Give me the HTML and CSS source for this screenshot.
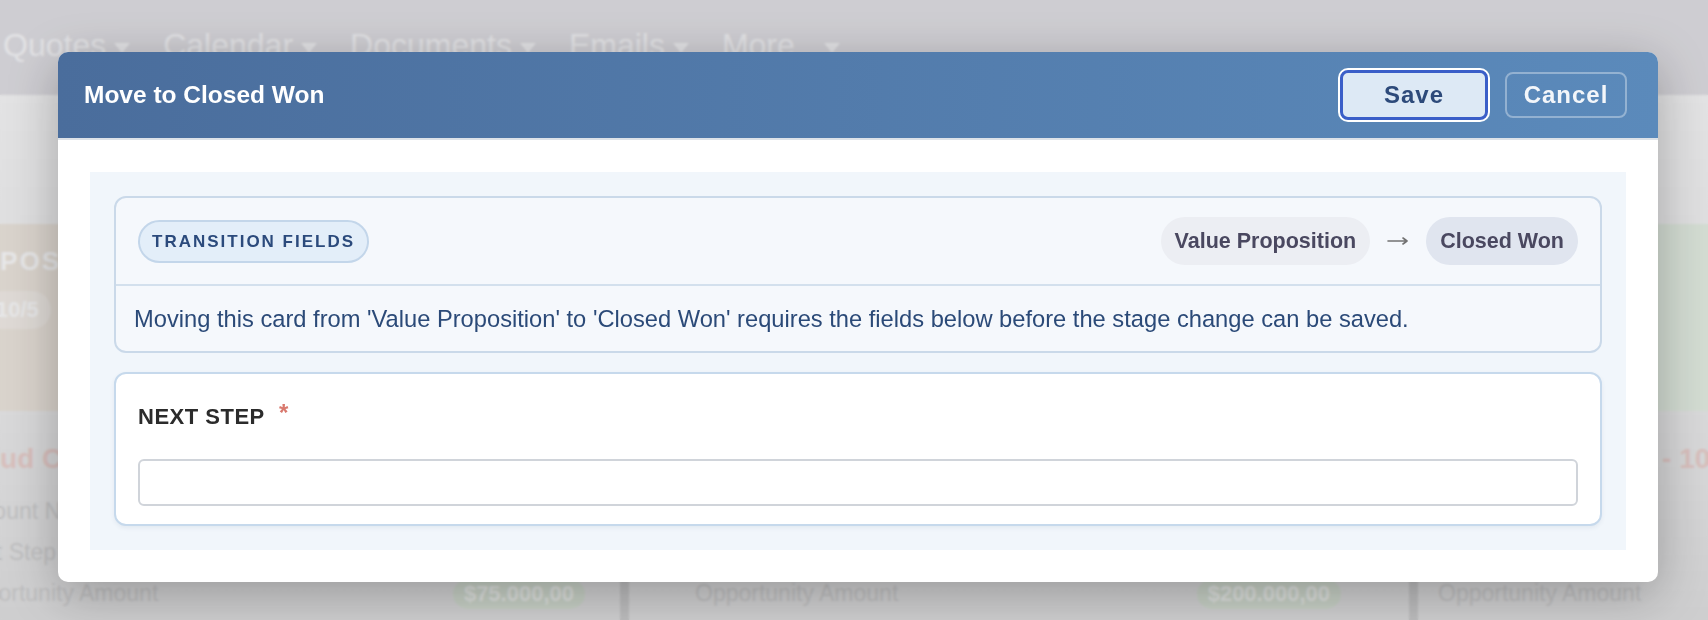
FILE: index.html
```html
<!DOCTYPE html>
<html lang="en">
<head>
    <meta charset="UTF-8">
    <meta name="viewport" content="width=device-width, initial-scale=1.0">
    <title>Pipeline Board</title>
    <link rel="stylesheet" href="styles.css">
</head>
<body>

    <!-- Top navigation -->
    <nav class="topnav">
        <span class="nav-item">Quotes<i class="caret"></i></span>
        <span class="nav-item">Calendar<i class="caret"></i></span>
        <span class="nav-item">Documents<i class="caret"></i></span>
        <span class="nav-item">Emails<i class="caret"></i></span>
        <span class="nav-item nav-more">More<i class="caret"></i></span>
    </nav>

    <!-- Kanban board -->
    <div class="board">
        <section class="column col-proposal">
            <div class="col-head">
                <span class="col-title">PROPOSAL</span>
                <span class="col-count">10/5</span>
            </div>
            <div class="deal">
                <div class="deal-name">Cloud Consulting</div>
                <div class="deal-row">Account Name</div>
                <div class="deal-row">Next Step</div>
                <div class="deal-row deal-amount">
                    <span>Opportunity Amount</span>
                    <span class="money">$75.000,00</span>
                </div>
            </div>
        </section>

        <section class="column col-value">
            <div class="col-head">
                <span class="col-title">VALUE PROPOSITION</span>
                <span class="col-count">4/5</span>
            </div>
            <div class="deal">
                <div class="deal-name">Enterprise Upgrade</div>
                <div class="deal-row">Account Name</div>
                <div class="deal-row">Next Step</div>
                <div class="deal-row deal-amount">
                    <span>Opportunity Amount</span>
                    <span class="money">$200.000,00</span>
                </div>
            </div>
        </section>

        <section class="column col-won">
            <div class="col-head">
                <span class="col-title">CLOSED WON</span>
                <span class="col-count">2/5</span>
            </div>
            <div class="deal">
                <div class="deal-name">Cloud Seats Pro - 100</div>
                <div class="deal-row">Account Name</div>
                <div class="deal-row">Next Step</div>
                <div class="deal-row deal-amount">
                    <span>Opportunity Amount</span>
                </div>
            </div>
        </section>
    </div>

    <!-- Stage change dialog -->
    <div class="overlay">
        <div class="modal">
            <div class="modal-header">
                <h2 class="modal-title">Move to Closed Won</h2>
                <div class="modal-actions">
                    <button class="btn btn-save">Save</button>
                    <button class="btn btn-cancel">Cancel</button>
                </div>
            </div>

            <div class="modal-body">
                <div class="fields-panel">
                    <div class="transition-card">
                        <div class="transition-head">
                            <span class="badge">TRANSITION FIELDS</span>
                            <div class="stages">
                                <span class="stage stage-from">Value Proposition</span>
                                <svg class="stage-arrow" width="22" height="12" viewBox="0 0 22 12">
                                    <path d="M1 6h19M16 3l4 3-4 3" fill="none" stroke="#727272" stroke-width="1.6" stroke-linecap="round" stroke-linejoin="round"/>
                                </svg>
                                <span class="stage stage-to">Closed Won</span>
                            </div>
                        </div>
                        <p class="transition-note">Moving this card from 'Value Proposition' to 'Closed Won' requires the fields below before the stage change can be saved.</p>
                    </div>

                    <div class="field-card">
                        <label class="field-label" for="nextStep">NEXT STEP <span class="required">*</span></label>
                        <input type="text" id="nextStep" class="field-input">
                    </div>
                </div>
            </div>
        </div>
    </div>

</body>
</html>
```

FILE: styles.css
```css
* {
    margin: 0;
    padding: 0;
    box-sizing: border-box;
    font-family: "Liberation Sans", Arial, sans-serif;
}

body {
    height: 100vh;
    overflow: hidden;
    background: #f6f6f6;
}

/* Top navigation */
.topnav {
    height: 95px;
    display: flex;
    align-items: flex-start;
    gap: 33px;
    padding: 27px 0 0 3px;
    background: #e4e3e7;
}

.nav-item {
    display: flex;
    align-items: center;
    font-size: 32px;
    line-height: 36px;
    color: #fafafc;
}

.caret {
    width: 0;
    height: 0;
    margin: 6px 0 0 8px;
    border-left: 8px solid transparent;
    border-right: 8px solid transparent;
    border-top: 10px solid #fafafc;
}

.nav-more .caret {
    margin-left: 29px;
}

/* Board */
.board {
    display: flex;
    margin-left: -120px;
    padding-top: 129px;
    height: calc(100vh - 95px);
    background: linear-gradient(180deg, #fbfbfb 0%, #f0f0f0 60%, #e4e4e4 100%);
}

.column {
    flex: none;
    border-right: 9px solid #d0d0d0;
}

.col-proposal {
    width: 749px;
    padding: 0 35px 0 0;
}

.col-value {
    width: 789px;
    padding: 0 68px 0 0;
}

.col-won {
    width: 500px;
    border-right: none;
}

.col-head {
    height: 187px;
    padding: 22px 0 0 58px;
    display: flex;
    flex-direction: column;
    align-items: flex-start;
    gap: 14px;
    background: #f0e9e0;
}

.col-value .col-head {
    background: #e6edf6;
    padding-left: 66px;
}

.col-won .col-head {
    background: #e9f3e7;
    padding-left: 20px;
}

.col-title {
    font-size: 26px;
    font-weight: bold;
    letter-spacing: 2px;
    color: #ffffff;
}

.col-count {
    margin-left: 46px;
    padding: 6px 12px;
    border-radius: 20px;
    background: #f5f0ea;
    color: #ffffff;
    font-size: 22px;
    font-weight: bold;
}

.col-value .col-count,
.col-won .col-count {
    margin-left: 0;
}

.deal {
    padding: 31px 0 0 75px;
}

.col-value .deal {
    padding-left: 66px;
}

.col-won .deal {
    padding-left: 20px;
}

.deal-name {
    font-size: 28px;
    font-weight: bold;
    line-height: 34px;
    color: #efd3cf;
    white-space: nowrap;
    margin-bottom: 15px;
}

.deal-row {
    font-size: 23px;
    line-height: 41px;
    color: #d2d2d2;
    white-space: nowrap;
}

.deal-amount {
    display: flex;
    justify-content: space-between;
    align-items: center;
}

.money {
    padding: 2px 11px;
    border-radius: 15px;
    background: #dce6d9;
    color: #f5f8f4;
    font-size: 22px;
    font-weight: bold;
    line-height: 26px;
}

/* Dialog */
.overlay {
    position: fixed;
    inset: 0;
    display: flex;
    align-items: flex-start;
    padding: 52px 0 0 58px;
    background: rgba(20, 20, 30, 0.1);
    backdrop-filter: blur(1px);
}

.modal {
    width: 1600px;
    background: #fff;
    border-radius: 10px;
    overflow: hidden;
    box-shadow: 0 12px 50px rgba(0, 0, 0, 0.28);
}

.modal-header {
    height: 88px;
    display: flex;
    align-items: center;
    justify-content: space-between;
    padding: 0 31px 0 26px;
    background: linear-gradient(90deg, #4a6d9c 0%, #5b8abb 100%);
    border-bottom: 2px solid #dde2e8;
}

.modal-title {
    font-size: 24.5px;
    font-weight: bold;
    color: #fff;
}

.modal-actions {
    display: flex;
    align-items: center;
    gap: 17px;
}

.btn {
    font-size: 24px;
    font-weight: bold;
    letter-spacing: 1px;
    border-radius: 8px;
    cursor: pointer;
}

.btn-save {
    width: 148px;
    height: 50px;
    border: 3px solid #3a5ec8;
    background: #dde9f5;
    color: #2d4a7a;
    box-shadow: 0 0 0 2px #fff;
}

.btn-cancel {
    width: 122px;
    height: 46px;
    border: 2px solid rgba(255, 255, 255, 0.35);
    background: transparent;
    color: #f3f6fa;
}

.modal-body {
    padding: 32px;
}

.fields-panel {
    display: flex;
    flex-direction: column;
    gap: 19px;
    padding: 24px;
    background: #f1f6fb;
}

.transition-card {
    border: 2px solid #cad9e9;
    border-radius: 12px;
    background: #f5f8fc;
}

.transition-head {
    height: 88px;
    display: flex;
    align-items: center;
    justify-content: space-between;
    padding: 0 22px;
    border-bottom: 2px solid #d3e0ed;
}

.badge {
    padding: 9px 12px;
    border: 2px solid #c3d6ea;
    border-radius: 999px;
    background: #e3eef9;
    color: #2b4a7c;
    font-size: 17px;
    font-weight: bold;
    letter-spacing: 2px;
    line-height: 21px;
}

.stages {
    display: flex;
    align-items: center;
    gap: 17px;
}

.stage {
    padding: 12px 14px;
    border-radius: 999px;
    font-size: 21.5px;
    font-weight: bold;
    line-height: 24px;
    color: #4a4860;
}

.stage-from {
    background: #eceef3;
}

.stage-to {
    background: #e0e5ef;
}

.stage-arrow {
    display: block;
}

.transition-note {
    padding: 19px 18px 18px;
    font-size: 23.7px;
    line-height: 28px;
    color: #2b4a78;
}

.field-card {
    padding: 29px 22px 18px;
    border: 2px solid #c6d9ec;
    border-radius: 12px;
    background: #fff;
    box-shadow: 0 2px 4px rgba(60, 90, 130, 0.08);
}

.field-label {
    display: block;
    margin-bottom: 29px;
    font-size: 22px;
    font-weight: bold;
    letter-spacing: 0.5px;
    line-height: 26px;
    color: #2b2b2b;
}

.required {
    position: relative;
    top: -3px;
    margin-left: 8px;
    font-size: 24px;
    color: #d9796e;
}

.field-input {
    display: block;
    width: 100%;
    height: 47px;
    padding: 0 12px;
    border: 2px solid #d0d4da;
    border-radius: 6px;
    font-size: 20px;
    outline: none;
}
```
